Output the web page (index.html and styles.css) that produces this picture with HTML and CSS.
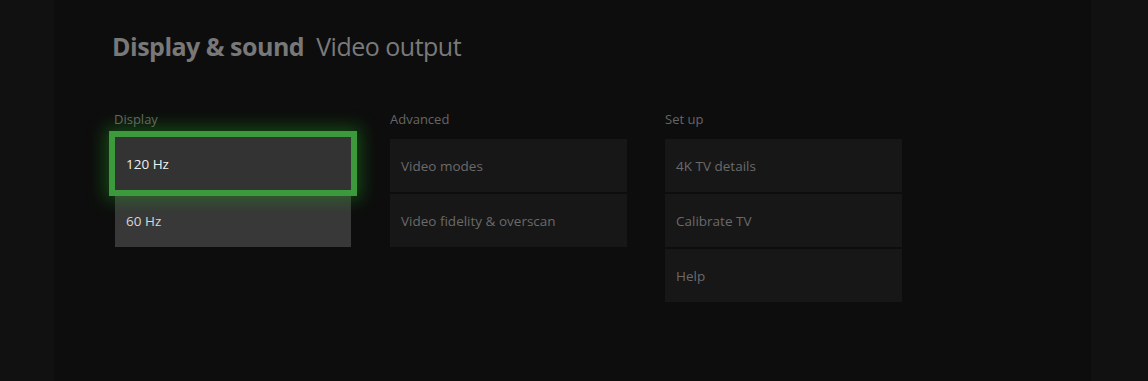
FILE: index.html
```html
<!DOCTYPE html>
<html lang="en">
<head>
<meta charset="utf-8">
<title>Display &amp; sound - Video output</title>
<link rel="stylesheet" href="styles.css">
</head>
<body>
<div class="screen">
  <div class="side"></div>
  <main class="main">
    <h1 class="title"><span class="title-strong">Display &amp; sound</span><span class="title-light">Video output</span></h1>
    <div class="columns">
      <section class="group">
        <h2 class="group-label">Display</h2>
        <div class="tiles">
          <div class="tile tile-light tile-focus">120 Hz</div>
          <div class="tile tile-light">60 Hz</div>
        </div>
      </section>
      <section class="group">
        <h2 class="group-label">Advanced</h2>
        <div class="tiles">
          <div class="tile">Video modes</div>
          <div class="tile">Video fidelity &amp; overscan</div>
        </div>
      </section>
      <section class="group">
        <h2 class="group-label">Set up</h2>
        <div class="tiles">
          <div class="tile">4K TV details</div>
          <div class="tile">Calibrate TV</div>
          <div class="tile">Help</div>
        </div>
      </section>
    </div>
  </main>
  <div class="side"></div>
</div>
</body>
</html>
```
FILE: styles.css
```css
html, body {
  margin: 0;
  padding: 0;
  background: #0d0d0d;
}

body {
  font-family: "Open Sans", "Noto Sans", sans-serif;
}

.screen {
  display: flex;
  width: 1148px;
  height: 381px;
  overflow: hidden;
}

.side {
  width: 54px;
  flex: none;
  background: #111111;
}

.side:last-child {
  width: 57px;
}

.main {
  flex: 1;
  background: #0d0d0d;
  padding: 29px 0 0 61px;
}

.title {
  margin: 0 0 0 -3px;
  font-size: 25px;
  line-height: 34px;
  font-weight: 400;
  color: #7a7a7a;
  display: flex;
  gap: 12px;
  letter-spacing: -0.5px;
}

.title-strong {
  font-weight: 700;
  color: #787878;
}

.title-light {
  font-weight: 400;
  color: #7a7a7a;
}

.columns {
  display: flex;
  gap: 38px;
  margin-top: 47px;
}

.group {
  width: 237px;
}

.group-label {
  margin: 0 0 11px 0;
  font-size: 13px;
  line-height: 18px;
  font-weight: 400;
  color: #666666;
}

.group:first-child .group-label {
  margin-left: -1px;
}

.group:first-child .tiles {
  width: 236px;
}

.tiles {
  display: flex;
  flex-direction: column;
  gap: 2px;
}

.tile {
  height: 53px;
  box-sizing: border-box;
  padding-left: 11px;
  display: flex;
  align-items: center;
  background: #171717;
  color: #6a6a6a;
  font-size: 13.5px;
}

.tile-light {
  background: #383838;
  color: #d6d6d6;
}

.tile-focus {
  position: relative;
  z-index: 1;
  background: #333333;
  color: #f0f0f0;
  margin-top: -2px;
  margin-bottom: 2px;
  box-shadow: 0 0 0 6px #3c9a3c, 0 0 16px 10px rgba(30, 160, 30, 0.4);
}
```
